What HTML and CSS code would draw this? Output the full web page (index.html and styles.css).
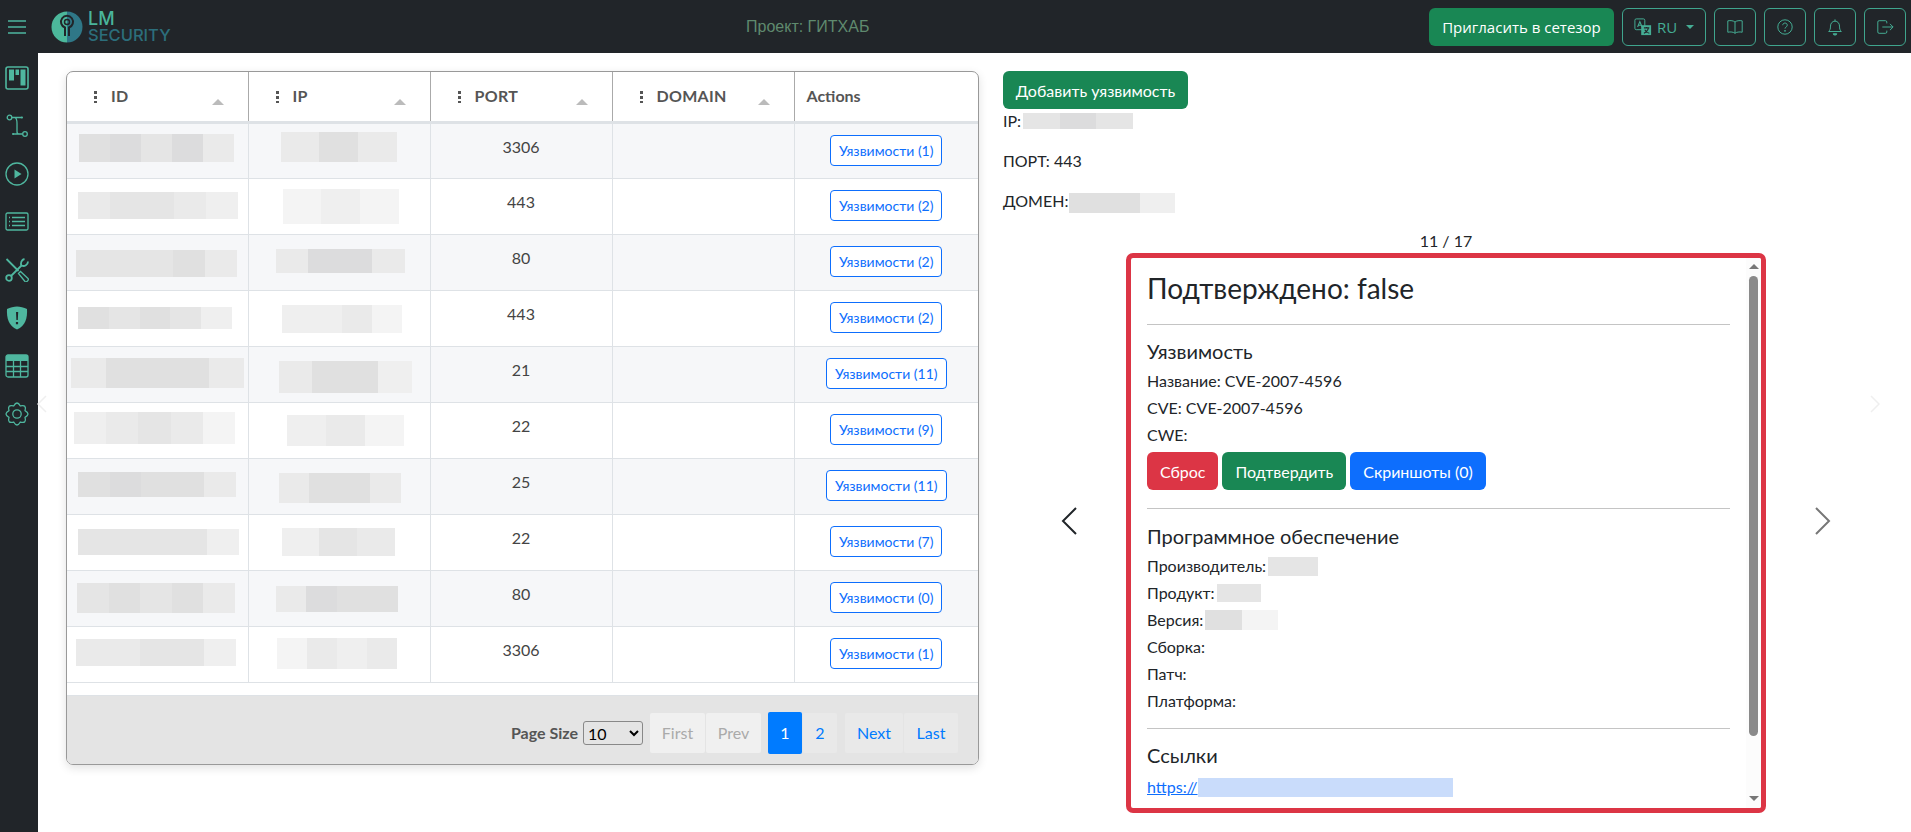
FILE: index.html
```html
<!DOCTYPE html>
<html lang="ru">
<head>
    <meta charset="UTF-8">
    <title>LM Security</title>
    <link rel="stylesheet" href="styles.css">
</head>
<body>

    <!-- Верхняя панель -->
    <header class="topbar">
        <div class="topbar-left">
            <svg class="burger" viewBox="0 0 18 14"><path d="M0 1h18M0 7h18M0 13h18"/></svg>
            <svg class="logo-mark" viewBox="0 0 32 32">
                <path d="M16 0.500a15.500 15.500 0 0 0 0 31z" fill="#4cb89b"/>
                <path d="M16 0.500a15.500 15.500 0 0 1 0 31z" fill="#2f7787"/>
                <path d="M14 25v-8.500a6 6 0 1 1 4 0V25" fill="none" stroke="#212529" stroke-width="2"/>
                <circle cx="16" cy="11" r="2.500" fill="none" stroke="#212529" stroke-width="1.500"/>
            </svg>
            <div class="logo-text"><span class="logo-lm">LM</span><span class="logo-sec">SECURITY</span></div>
        </div>
        <div class="project">Проект: ГИТХАБ</div>
        <div class="topbar-right">
            <button class="btn-invite">Пригласить в сетезор</button>
            <button class="btn-nav btn-lang">
                <svg class="nav-icon" viewBox="0 0 20 20">
                    <rect x="1" y="1" width="11" height="12" rx="1.500" fill="none"/>
                    <path d="M8 8h11v11H8z" fill="#45ad94" stroke="none"/>
                    <path d="M4 10l2.500-6 2.500 6M5 8h3" stroke-width="1.200" fill="none"/>
                    <path d="M11 11h6M14 10v1M16 11c-.500 3-3 5-5 6M12 13c1 2 3 3.500 5 4" stroke="#212529" stroke-width="1.200" fill="none"/>
                </svg>
                RU
                <span class="caret"></span>
            </button>
            <button class="btn-nav">
                <svg class="nav-icon" viewBox="0 0 20 20"><path d="M10 4.500C8.500 3 5 2.500 2 3.200v12.600c3-.700 6.500-.200 8 1.200 1.500-1.400 5-1.900 8-1.200V3.200C15 2.500 11.500 3 10 4.500zM10 4.500V17"/></svg>
            </button>
            <button class="btn-nav">
                <svg class="nav-icon" viewBox="0 0 20 20"><circle cx="10" cy="10" r="8"/><path d="M7.500 8c0-3.200 5-3.200 5 0 0 2-2.500 2-2.500 3.800"/><circle cx="10" cy="14.300" r=".600"/></svg>
            </button>
            <button class="btn-nav">
                <svg class="nav-icon" viewBox="0 0 20 20"><path d="M3 15c1.500-1.500 2-3 2-6 0-3 2-5.500 5-5.500s5 2.500 5 5.500c0 3 .500 4.500 2 6zM10 1.500v2"/><path d="M8 17.500a2 1.500 0 0 0 4 0z" fill="#45ad94"/></svg>
            </button>
            <button class="btn-nav">
                <svg class="nav-icon" viewBox="0 0 20 20"><path d="M12 6V4.500A1.500 1.500 0 0 0 10.500 3h-7A1.500 1.500 0 0 0 2 4.500v11A1.500 1.500 0 0 0 3.500 17h7a1.500 1.500 0 0 0 1.500-1.500V14M7 10h12M15.500 6.500L19 10l-3.500 3.500"/></svg>
            </button>
        </div>
    </header>

    <div class="layout">
        <!-- Боковое меню -->
        <nav class="sidebar">
            <svg class="side-icon" viewBox="0 0 24 24">
                <rect x="1" y="1" width="22" height="22" rx="2" stroke-width="1.600"/>
                <path class="fill" d="M4 3.500h5v11H4zM10.500 3.500h3.500v5.500h-3.500zM15.500 3.500h5v16h-5z"/>
            </svg>
            <svg class="side-icon" viewBox="0 0 24 24">
                <circle cx="4.500" cy="3.500" r="2.300"/>
                <circle cx="20" cy="20" r="2.300"/>
                <path d="M7 3.500h10M10 3.500c2 1 2 3 2 6s0 6 0 8 1 2.500 2 2.500h3.500M8 20h5"/>
                <circle class="fill" cx="17" cy="3.500" r="1"/>
                <circle class="fill" cx="8" cy="20" r="1"/>
            </svg>
            <svg class="side-icon" viewBox="0 0 24 24">
                <circle cx="12" cy="12" r="11"/>
                <path class="fill" d="M9.500 7.500l7 4.500-7 4.500z"/>
            </svg>
            <svg class="side-icon" viewBox="0 0 24 24">
                <rect x="1" y="3" width="22" height="17" rx="1.500"/>
                <path d="M7 7.500h13M7 11.500h13M7 15.500h13M4 7.500h1M4 11.500h1M4 15.500h1"/>
            </svg>
            <svg class="side-icon" viewBox="0 0 24 24">
                <path class="thick" d="M1.500 1L13.500 13"/>
                <path d="M13.500 15.500l2-2 7.500 7c.800 1 .500 1.500-.500 2.500s-1.700 1.200-2.500.500z"/>
                <path class="thick" d="M16.500 7.500L6 18"/>
                <circle class="thick" cx="4" cy="20" r="2.800"/>
                <path class="thick" d="M23 3.500a4.500 4.500 0 0 1-6.500 4 4.500 4.500 0 0 1 3-6.500"/>
            </svg>
            <svg class="side-icon" viewBox="0 0 24 24">
                <path class="fill" d="M12 0.500c3 0 7 1 10 2.500.500 9-1.500 17-10 20.500C3.500 20 1.500 12 2 3c3-1.500 7-2.500 10-2.500z"/>
                <path class="cut" d="M11 6h2.200l-.400 8h-1.400zM10.900 16h2.200v2.200h-2.200z"/>
            </svg>
            <svg class="side-icon" viewBox="0 0 24 24">
                <rect x="1" y="1" width="22" height="22" rx="2"/>
                <path class="fill" d="M1 2.500a1.500 1.500 0 0 1 1.500-1.500h19a1.500 1.500 0 0 1 1.500 1.500V7H1z"/>
                <path d="M1 12.500h22M1 17.500h22M8.500 7v16M15.500 7v16"/>
            </svg>
            <svg class="side-icon" viewBox="0 0 24 24">
                <path d="M15.330 3.960Q21.900 2.100 20.040 8.670Q26 12 20.040 15.330Q21.900 21.900 15.330 20.040Q12 26 8.670 20.040Q2.100 21.900 3.960 15.330Q-2 12 3.960 8.670Q2.100 2.100 8.670 3.960Q12 -2 15.330 3.960z"/>
                <circle cx="12" cy="12" r="4.200"/>
            </svg>
        </nav>

        <svg class="ghost ghost-left" viewBox="0 0 10 18"><path d="M9 1L1 9l8 8"/></svg>
        <svg class="ghost ghost-right" viewBox="0 0 10 18"><path d="M1 1l8 8-8 8"/></svg>

        <main class="content">
            <!-- Таблица -->
            <section class="grid-box">
                <table class="grid">
                    <thead>
                        <tr>
                            <th><span class="col-head"><span class="dots"></span>ID<span class="sort"></span></span></th>
                            <th><span class="col-head"><span class="dots"></span>IP<span class="sort"></span></span></th>
                            <th><span class="col-head"><span class="dots"></span>PORT<span class="sort"></span></span></th>
                            <th><span class="col-head"><span class="dots"></span>DOMAIN<span class="sort"></span></span></th>
                            <th class="th-actions">Actions</th>
                        </tr>
                    </thead>
                    <tbody>
                        <tr>
                            <td class="cell-mask"><div class="mask a1"><i class="g5"></i><i class="g6"></i><i class="g4"></i><i class="g6"></i><i class="g3"></i></div></td>
                            <td class="cell-mask"><div class="mask b1"><i class="g3"></i><i class="g5"></i><i class="g3"></i></div></td>
                            <td>3306</td>
                            <td></td>
                            <td><button class="btn-vuln">Уязвимости (1)</button></td>
                        </tr>
                        <tr>
                            <td class="cell-mask"><div class="mask a2"><i class="g3"></i><i class="g4"></i><i class="g4"></i><i class="g3"></i><i class="g2"></i></div></td>
                            <td class="cell-mask"><div class="mask b2"><i class="g1"></i><i class="g2"></i><i class="g1"></i></div></td>
                            <td>443</td>
                            <td></td>
                            <td><button class="btn-vuln">Уязвимости (2)</button></td>
                        </tr>
                        <tr>
                            <td class="cell-mask"><div class="mask a3"><i class="g4"></i><i class="g4"></i><i class="g4"></i><i class="g5"></i><i class="g3"></i></div></td>
                            <td class="cell-mask"><div class="mask b3"><i class="g3"></i><i class="g6"></i><i class="g6"></i><i class="g3"></i></div></td>
                            <td>80</td>
                            <td></td>
                            <td><button class="btn-vuln">Уязвимости (2)</button></td>
                        </tr>
                        <tr>
                            <td class="cell-mask"><div class="mask a4"><i class="g5"></i><i class="g4"></i><i class="g5"></i><i class="g4"></i><i class="g2"></i></div></td>
                            <td class="cell-mask"><div class="mask b4"><i class="g2"></i><i class="g2"></i><i class="g3"></i><i class="g1"></i></div></td>
                            <td>443</td>
                            <td></td>
                            <td><button class="btn-vuln">Уязвимости (2)</button></td>
                        </tr>
                        <tr>
                            <td class="cell-mask"><div class="mask a5"><i class="g3"></i><i class="g5"></i><i class="g5"></i><i class="g5"></i><i class="g3"></i></div></td>
                            <td class="cell-mask"><div class="mask b5"><i class="g3"></i><i class="g5"></i><i class="g5"></i><i class="g2"></i></div></td>
                            <td>21</td>
                            <td></td>
                            <td><button class="btn-vuln">Уязвимости (11)</button></td>
                        </tr>
                        <tr>
                            <td class="cell-mask"><div class="mask a6"><i class="g2"></i><i class="g3"></i><i class="g4"></i><i class="g3"></i><i class="g1"></i></div></td>
                            <td class="cell-mask"><div class="mask b6"><i class="g2"></i><i class="g3"></i><i class="g1"></i></div></td>
                            <td>22</td>
                            <td></td>
                            <td><button class="btn-vuln">Уязвимости (9)</button></td>
                        </tr>
                        <tr>
                            <td class="cell-mask"><div class="mask a7"><i class="g5"></i><i class="g6"></i><i class="g5"></i><i class="g5"></i><i class="g3"></i></div></td>
                            <td class="cell-mask"><div class="mask b7"><i class="g3"></i><i class="g5"></i><i class="g5"></i><i class="g3"></i></div></td>
                            <td>25</td>
                            <td></td>
                            <td><button class="btn-vuln">Уязвимости (11)</button></td>
                        </tr>
                        <tr>
                            <td class="cell-mask"><div class="mask a8"><i class="g4"></i><i class="g4"></i><i class="g4"></i><i class="g4"></i><i class="g2"></i></div></td>
                            <td class="cell-mask"><div class="mask b8"><i class="g2"></i><i class="g4"></i><i class="g3"></i></div></td>
                            <td>22</td>
                            <td></td>
                            <td><button class="btn-vuln">Уязвимости (7)</button></td>
                        </tr>
                        <tr>
                            <td class="cell-mask"><div class="mask a9"><i class="g4"></i><i class="g5"></i><i class="g4"></i><i class="g5"></i><i class="g3"></i></div></td>
                            <td class="cell-mask"><div class="mask b9"><i class="g3"></i><i class="g6"></i><i class="g5"></i><i class="g5"></i></div></td>
                            <td>80</td>
                            <td></td>
                            <td><button class="btn-vuln">Уязвимости (0)</button></td>
                        </tr>
                        <tr>
                            <td class="cell-mask"><div class="mask a10"><i class="g3"></i><i class="g3"></i><i class="g4"></i><i class="g4"></i><i class="g2"></i></div></td>
                            <td class="cell-mask"><div class="mask b10"><i class="g1"></i><i class="g3"></i><i class="g2"></i><i class="g3"></i></div></td>
                            <td>3306</td>
                            <td></td>
                            <td><button class="btn-vuln">Уязвимости (1)</button></td>
                        </tr>
                    </tbody>
                </table>
                <div class="grid-footer">
                    <span class="size-label">Page Size</span>
                    <select class="size-select"><option>10</option></select>
                    <div class="pager">
                        <span class="page off">First</span>
                        <span class="page off">Prev</span>
                    </div>
                    <div class="pager pager-nums">
                        <span class="page num active">1</span>
                        <span class="page num">2</span>
                    </div>
                    <div class="pager">
                        <span class="page page-next">Next</span>
                        <span class="page page-last">Last</span>
                    </div>
                </div>
            </section>

            <!-- Правая часть -->
            <section class="detail">
                <button class="btn btn-green btn-add">Добавить уязвимость</button>
                <p>IP:<span class="mask-inline ip-mask"><i class="g4"></i><i class="g6"></i><i class="g4"></i></span></p>
                <p>ПОРТ: 443</p>
                <p>ДОМЕН:<span class="mask-inline dom-mask"><i class="g5"></i><i class="g5"></i><i class="g2"></i></span></p>
                <div class="counter">11 / 17</div>
                <div class="carousel">
                    <div class="arrow arrow-prev"><svg viewBox="0 0 16 28"><path d="M15 1L2 14l13 13"/></svg></div>
                    <div class="vuln-card">
                        <div class="vuln-body">
                            <h2>Подтверждено: false</h2>
                            <hr>
                            <h5>Уязвимость</h5>
                            <p>Название: CVE-2007-4596</p>
                            <p>CVE: CVE-2007-4596</p>
                            <p>CWE:</p>
                            <div class="vuln-actions">
                                <button class="btn btn-red">Сброс</button>
                                <button class="btn btn-green">Подтвердить</button>
                                <button class="btn btn-blue">Скриншоты (0)</button>
                            </div>
                            <hr>
                            <h5>Программное обеспечение</h5>
                            <p>Производитель:<span class="mask-inline vendor-mask"><i class="g4"></i></span></p>
                            <p>Продукт:<span class="mask-inline product-mask"><i class="g4"></i></span></p>
                            <p>Версия:<span class="mask-inline version-mask"><i class="g5"></i><i class="g1"></i></span></p>
                            <p>Сборка:</p>
                            <p>Патч:</p>
                            <p>Платформа:</p>
                            <hr class="hr-tight">
                            <h5 class="h-links">Ссылки</h5>
                            <p><a href="#">https://</a><span class="mask-inline link-mask"></span></p>
                        </div>
                        <div class="scroll-track">
                            <span class="scroll-up"></span>
                            <span class="scroll-thumb"></span>
                            <span class="scroll-down"></span>
                        </div>
                    </div>
                    <div class="arrow arrow-next"><svg viewBox="0 0 16 28"><path d="M1 1l13 13L1 27"/></svg></div>
                </div>
            </section>
        </main>
    </div>

</body>
</html>
```

FILE: styles.css
```css
* {
    box-sizing: border-box;
}
body {
    margin: 0;
    height: 832px;
    overflow: hidden;
    background-color: #fff;
    color: #212529;
    font-family: "Lato", "Liberation Sans", sans-serif;
    font-size: 16px;
    line-height: 24px;
}
button {
    font-family: inherit;
    cursor: pointer;
}

/* Верхняя панель */
.topbar {
    display: flex;
    align-items: center;
    height: 53px;
    background-color: #212529;
}
.topbar-left {
    display: flex;
    align-items: center;
    width: 746px;
    padding-left: 8px;
}
.burger {
    width: 18px;
    height: 14px;
    fill: none;
    stroke: #4db6a0;
    stroke-width: 1.3;
}
.logo-mark {
    width: 32px;
    height: 32px;
    margin-left: 25px;
}
.logo-text {
    display: flex;
    flex-direction: column;
    margin-left: 5px;
    font-family: "Inter", sans-serif;
    font-weight: 500;
    line-height: 16px;
}
.logo-lm {
    color: #4ab59b;
    font-size: 18px;
}
.logo-sec {
    color: #2c6e7b;
    font-size: 16.500px;
}
.project {
    color: #5f8a6e;
    font-family: "Liberation Sans", sans-serif;
    font-size: 16px;
}
.topbar-right {
    display: flex;
    gap: 8px;
    margin-left: auto;
    padding-right: 5px;
}
.btn-invite {
    width: 185px;
    height: 38px;
    border: none;
    border-radius: 6px;
    background-color: #198754;
    color: #fff;
    font-family: "Open Sans", sans-serif;
    font-size: 15px;
    padding: 0;
}
.btn-nav {
    display: flex;
    align-items: center;
    justify-content: center;
    width: 42px;
    height: 38px;
    padding: 0;
    border: 1px solid #3fa58d;
    border-radius: 6px;
    background: none;
    color: #45ad94;
    font-family: "Open Sans", sans-serif;
    font-size: 15px;
}
.btn-lang {
    width: 84px;
    gap: 5px;
}
.nav-icon {
    width: 18px;
    height: 18px;
    fill: none;
    stroke: #45ad94;
    stroke-width: 1.100;
}
.caret {
    width: 0;
    height: 0;
    margin-left: 4px;
    border-left: 4px solid transparent;
    border-right: 4px solid transparent;
    border-top: 4px solid #45ad94;
}

/* Боковое меню */
.layout {
    position: relative;
    display: flex;
    height: 779px;
}
.sidebar {
    display: flex;
    flex-direction: column;
    align-items: center;
    gap: 24px;
    flex: none;
    width: 38px;
    padding: 13px 5px 0 0;
    background-color: #212529;
}
.side-icon {
    flex: none;
    width: 24px;
    height: 24px;
    fill: none;
    stroke: #4fb79f;
    stroke-width: 1.300;
}
.side-icon .fill {
    fill: #4fb79f;
    stroke: none;
}
.side-icon .cut {
    fill: #212529;
    stroke: none;
}
.side-icon .thick {
    stroke-width: 1.800;
}
.ghost {
    position: absolute;
    top: 342px;
    width: 10px;
    height: 18px;
    fill: none;
    stroke: #efefef;
    stroke-width: 1.500;
}
.ghost-left {
    left: 37px;
}
.ghost-right {
    left: 1870px;
}

.content {
    display: flex;
    align-items: flex-start;
    gap: 24px;
    padding: 18px 0 0 28px;
}

/* Таблица */
.grid-box {
    display: flex;
    flex-direction: column;
    width: 913px;
    height: 694px;
    border: 1px solid #999;
    border-radius: 7px;
    overflow: hidden;
    box-shadow: 0 3px 10px rgba(0, 0, 0, 0.12);
}
.grid {
    width: 100%;
    border-collapse: collapse;
    table-layout: fixed;
    color: #444;
}
.grid th {
    width: 182px;
    height: 50px;
    padding: 0;
    border-right: 1px solid #aaa;
    border-bottom: 3px solid #dee2e6;
    color: #555;
    font-weight: 700;
    text-align: left;
}
.grid th:first-child {
    width: 181px;
}
.grid th:last-child {
    border-right: none;
    width: auto;
}
.th-actions.th-actions {
    padding-left: 12px;
}
.col-head {
    display: flex;
    align-items: center;
    position: relative;
    padding-left: 27px;
    letter-spacing: 0.300px;
}
.dots {
    width: 3px;
    height: 13px;
    margin-right: 14px;
    background: radial-gradient(circle at center, #555 1.500px, transparent 1.600px) 0 0 / 3px 5px;
}
.sort {
    position: absolute;
    right: 24px;
    top: 15px;
    border-left: 6px solid transparent;
    border-right: 6px solid transparent;
    border-bottom: 6px solid #bbb;
}
.grid td {
    height: 56px;
    padding: 11px 0 0;
    border-right: 1px solid #dee2e6;
    border-bottom: 1px solid #dee2e6;
    text-align: center;
    vertical-align: top;
}
.grid td:last-child {
    border-right: none;
}
.grid td.cell-mask {
    padding: 1px 0 0;
}
.grid tbody tr:nth-child(odd) {
    background-color: #f6f7f9;
}
.btn-vuln {
    height: 31px;
    padding: 0 8px;
    border: 1px solid #0d6efd;
    border-radius: 4px;
    background-color: #fff;
    color: #0d6efd;
    font-size: 14px;
}

/* Размытые значения */
.mask, .mask-inline {
    display: flex;
}
.mask i, .mask-inline i {
    flex: 1;
}
.g1 { background-color: #f4f4f4; }
.g2 { background-color: #efefef; }
.g3 { background-color: #eaeaea; }
.g4 { background-color: #e5e5e5; }
.g5 { background-color: #e0e0e0; }
.g6 { background-color: #dcdcdd; }

.a1 { width: 155px; height: 28px; margin: 9px 0 0 12px; }
.a2 { width: 160px; height: 27px; margin: 12px 0 0 11px; }
.a3 { width: 161px; height: 27px; margin: 14px 0 0 9px; }
.a4 { width: 154px; height: 22px; margin: 15px 0 0 11px; }
.a5 { width: 173px; height: 30px; margin: 10px 0 0 4px; }
.a6 { width: 161px; height: 32px; margin: 8px 0 0 7px; }
.a7 { width: 158px; height: 25px; margin: 12px 0 0 11px; }
.a8 { width: 161px; height: 26px; margin: 13px 0 0 11px; }
.a9 { width: 158px; height: 30px; margin: 11px 0 0 10px; }
.a10 { width: 160px; height: 27px; margin: 11px 0 0 9px; }
.b1 { width: 116px; height: 30px; margin: 7px 0 0 32px; }
.b2 { width: 116px; height: 35px; margin: 9px 0 0 34px; }
.b3 { width: 129px; height: 24px; margin: 13px 0 0 27px; }
.b4 { width: 120px; height: 28px; margin: 13px 0 0 33px; }
.b5 { width: 133px; height: 32px; margin: 13px 0 0 30px; }
.b6 { width: 117px; height: 31px; margin: 11px 0 0 38px; }
.b7 { width: 122px; height: 30px; margin: 13px 0 0 30px; }
.b8 { width: 113px; height: 28px; margin: 12px 0 0 33px; }
.b9 { width: 122px; height: 26px; margin: 14px 0 0 27px; }
.b10 { width: 120px; height: 31px; margin: 10px 0 0 28px; }

/* Подвал таблицы */
.grid-footer {
    display: flex;
    align-items: center;
    justify-content: flex-end;
    margin-top: auto;
    height: 69px;
    padding: 6px 20px 0 0;
    background-color: #e4e4e4;
    border-top: 1px solid #dee2e6;
}
.size-label {
    color: #555;
    font-size: 16px;
    font-weight: 700;
    margin-right: 5px;
}
.size-select {
    width: 60px;
    height: 24px;
    margin-right: 7px;
    border: 1px solid #888;
    border-radius: 3px;
    background-color: #e4e4e4;
    color: #000;
    font-family: inherit;
    font-size: 16px;
}
.pager {
    display: flex;
    gap: 1px;
    margin-right: 7px;
}
.pager-nums {
    margin-right: 8px;
}
.pager:last-child {
    margin-right: 0;
}
.page {
    display: flex;
    align-items: center;
    justify-content: center;
    min-width: 53px;
    height: 40px;
    padding: 0 8px;
    border-radius: 2px;
    background-color: #e9e9e9;
    color: #007bff;
}
.page-next {
    min-width: 58px;
}
.page-last {
    min-width: 54px;
}
.page.off {
    min-width: 55px;
    background-color: #f0f0f0;
    color: #aaa;
}
.page.num {
    min-width: 34px;
}
.page.active {
    height: 42px;
    margin: -1px 0;
    background-color: #007bff;
    color: #fff;
}

/* Правая часть */
.detail {
    display: flex;
    flex-direction: column;
    align-items: flex-start;
    flex: 1;
}
.detail p {
    margin: 0 0 16px;
}
.detail p, .vuln-body p {
    display: flex;
    align-items: center;
}
.btn {
    height: 38px;
    padding: 0 13px;
    border: none;
    border-radius: 6px;
    color: #fff;
    font-size: 16px;
}
.btn-green { background-color: #198754; }
.btn-red { background-color: #dc3545; }
.btn-blue { background-color: #0d6efd; }
.btn-add {
    width: 185px;
    padding: 0;
}
.counter {
    width: 886px;
    text-align: center;
}
.carousel {
    display: flex;
    align-items: center;
}
.arrow {
    display: flex;
    justify-content: center;
    margin-bottom: 24px;
}
.arrow svg {
    width: 16px;
    height: 28px;
    fill: none;
    stroke-width: 2;
}
.arrow-prev {
    width: 123px;
    padding-left: 8px;
}
.arrow-prev svg {
    stroke: #212529;
}
.arrow-next {
    width: 114px;
}
.arrow-next svg {
    stroke: #777;
}
.vuln-card {
    display: flex;
    width: 640px;
    height: 560px;
    border: 5px solid #dc3545;
    border-radius: 7px;
    overflow: hidden;
}
.vuln-body {
    flex: 1;
    height: 100%;
    padding: 11px 16px 0;
    overflow: hidden;
}
.vuln-body h2 {
    margin: 0 0 17px;
    font-size: 28px;
    font-weight: 400;
    line-height: 38px;
}
.vuln-body hr {
    margin: 0 0 14px;
    border: none;
    border-top: 1px solid #c4c4c4;
}
.vuln-body h5 {
    margin: 0 0 6px;
    font-size: 20px;
    font-weight: 400;
    line-height: 24px;
}
.vuln-body p {
    margin: 0 0 3px;
}
.vuln-actions {
    display: flex;
    gap: 4px;
    margin: 5px 0 18px;
}
.vuln-actions + hr {
    margin-bottom: 15px;
}
.vuln-body .hr-tight {
    margin: 15px 0 14px;
}
.vuln-body .h-links {
    margin-bottom: 8px;
}
.vuln-body a {
    color: #0d6efd;
}

.mask-inline {
    display: inline-flex;
    margin-left: 2px;
}
.ip-mask { width: 110px; height: 16px; }
.dom-mask { width: 106px; height: 20px; margin-left: 1px; margin-top: 3px; }
.vendor-mask { width: 50px; height: 19px; }
.product-mask { width: 44px; height: 18px; }
.version-mask { width: 73px; height: 20px; }
.link-mask { width: 255px; height: 19px; margin-left: 0; background-color: #c9dcfb; }

/* Полоса прокрутки */
.scroll-track {
    display: flex;
    flex-direction: column;
    align-items: center;
    flex: none;
    width: 15px;
    background-color: #fcfcfc;
}
.scroll-up, .scroll-down {
    flex: none;
    width: 0;
    height: 0;
    border-left: 5px solid transparent;
    border-right: 5px solid transparent;
}
.scroll-up {
    margin-top: 6px;
    border-bottom: 5px solid #777;
}
.scroll-thumb {
    flex: none;
    width: 9px;
    height: 460px;
    margin-top: 7px;
    border-radius: 5px;
    background-color: #8a8a8a;
}
.scroll-down {
    margin-top: auto;
    margin-bottom: 7px;
    border-top: 5px solid #777;
}
```
